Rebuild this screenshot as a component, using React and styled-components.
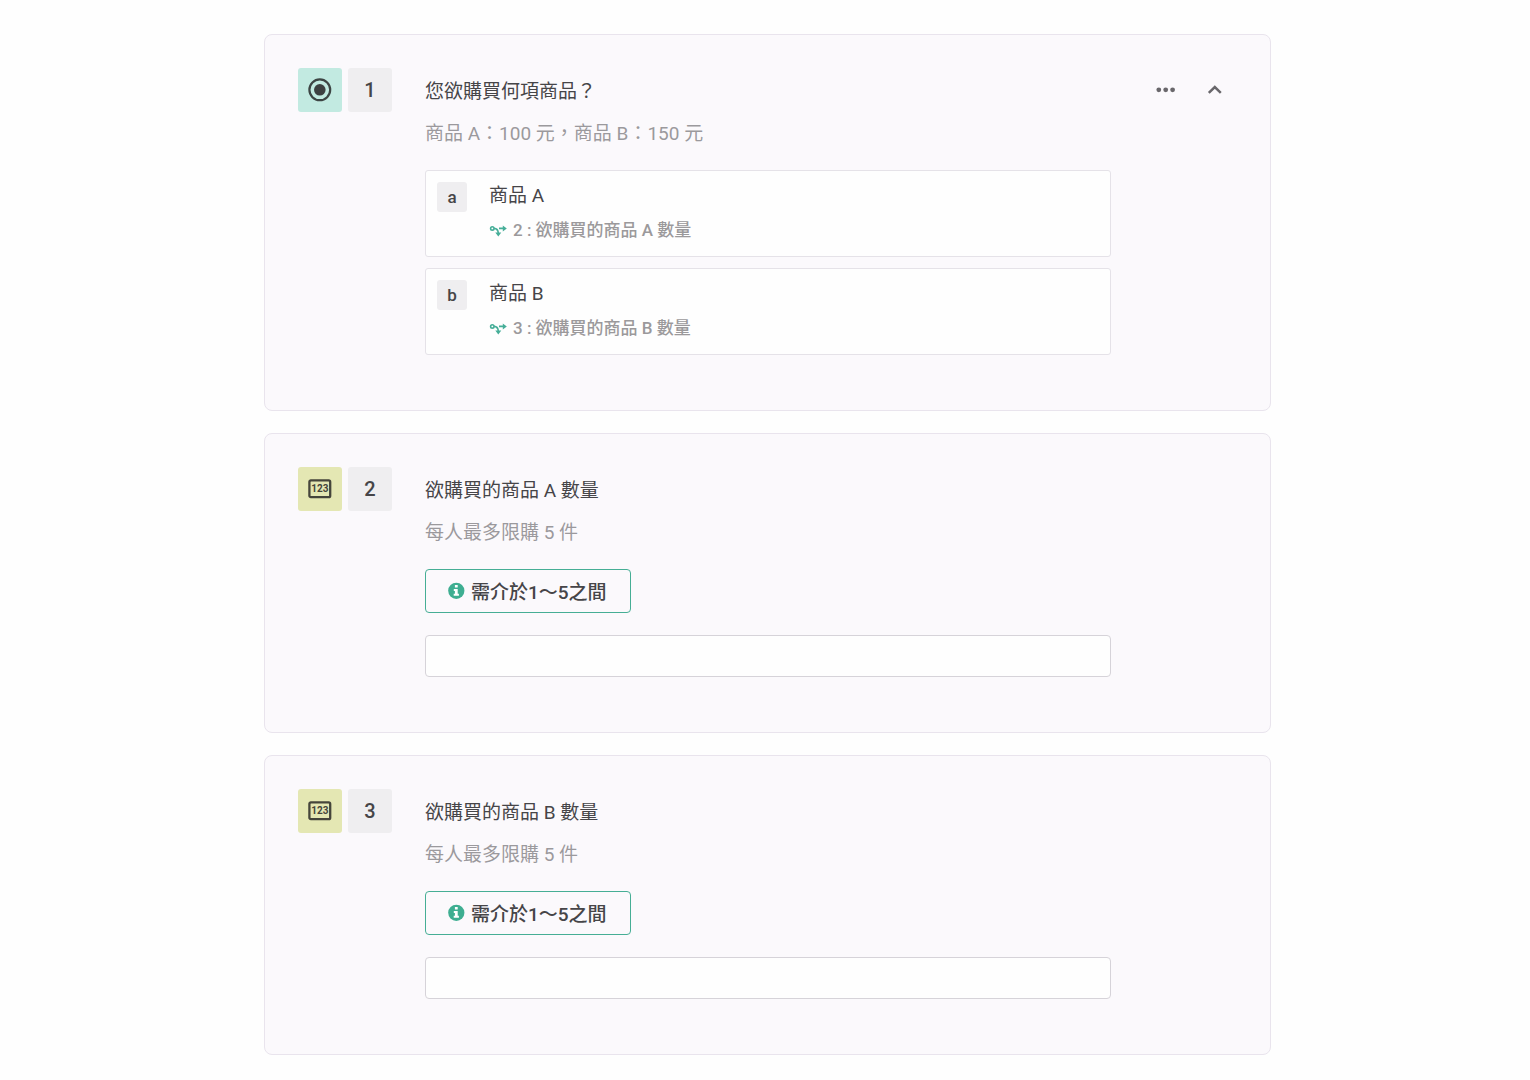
import React from "react";
import styled, { createGlobalStyle } from "styled-components";

const GlobalStyle = createGlobalStyle`
  *, *::before, *::after { box-sizing: border-box; }
  body {
    margin: 0;
    background: #fefefe;
    color: #464548;
    font-family: Roboto, "Noto Sans CJK TC", sans-serif;
    font-size: 19px;
  }
`;

const Page = styled.main`
  padding: 34px 16px 26px 21px;
`;

const QuestionList = styled.div`
  display: flex;
  flex-direction: column;
  gap: 22px;
  max-width: 1007px;
  margin: 0 auto;
`;

const Card = styled.section`
  display: flex;
  align-items: flex-start;
  gap: 33px;
  padding: 33px 33px 55px;
  border: 1px solid #e9e4ed;
  border-radius: 8px;
  background: #fbf9fc;
`;

const Tiles = styled.div`
  display: flex;
  flex: none;
  gap: 6px;
`;

const Tile = styled.span`
  display: flex;
  align-items: center;
  justify-content: center;
  width: ${(p) => (p.$small ? 30 : 44)}px;
  height: ${(p) => (p.$small ? 30 : 44)}px;
  flex: none;
  border-radius: 3px;
  background: ${(p) => p.$tone || "#efeef0"};
  font-size: ${(p) => (p.$small ? 17 : 20)}px;
  font-weight: 500;
`;

const Content = styled.div`
  flex: 0 1 686px;
  min-width: 0;
`;

const Title = styled.h2`
  margin: 0;
  font-size: 19px;
  font-weight: 400;
  line-height: 48px;
`;

const Description = styled.p`
  margin: 0 0 18px;
  color: #9b999d;
  line-height: 36px;
`;

const Options = styled.ul`
  display: flex;
  flex-direction: column;
  gap: 11px;
  margin: 0;
  padding: 0;
  list-style: none;
`;

const Option = styled.li`
  display: flex;
  gap: 22px;
  padding: 11px 11px 12px;
  border: 1px solid #e5e2e8;
  border-radius: 3px;
  background: #fefefe;
`;

const OptionText = styled.div`
  display: flex;
  flex-direction: column;
  gap: 6px;
  line-height: 28px;
`;

const Branch = styled.div`
  display: flex;
  align-items: center;
  gap: 6px;
  color: #9b999b;
  font-size: 17px;
  font-weight: 500;
`;

const Notice = styled.div`
  display: inline-flex;
  align-items: center;
  gap: 6px;
  height: 44px;
  padding: 0 23px 2px 22px;
  border: 1px solid #46ae95;
  border-radius: 4px;
  font-weight: 500;
`;

const NumberInput = styled.input`
  display: block;
  width: 100%;
  height: 42px;
  margin-top: 22px;
  padding: 0 11px;
  border: 1px solid #d6d3d9;
  border-radius: 4px;
  background: #fefefe;
  color: inherit;
  font: inherit;
`;

const Actions = styled.div`
  display: flex;
  gap: 5px;
  margin-left: auto;
`;

const IconButton = styled.button`
  display: flex;
  align-items: center;
  justify-content: center;
  width: 44px;
  height: 44px;
  padding: 0;
  border: 0;
  background: transparent;
  color: #69676b;
  cursor: pointer;
`;

function RadioIcon() {
  return (
    <svg width="24" height="24" viewBox="0 0 24 24" fill="none" aria-hidden="true">
      <circle cx="11.8" cy="11.8" r="10.4" stroke="#3d4544" strokeWidth="2.2" />
      <circle cx="11.8" cy="11.8" r="5.8" fill="#3d4041" />
    </svg>
  );
}

function NumberIcon() {
  return (
    <svg width="24" height="20" viewBox="0 0 24 20" fill="none" aria-hidden="true">
      <rect x="1.4" y="1.4" width="20.8" height="16.8" rx="1.5" stroke="#45453b" strokeWidth="2.3" />
      <text x="11.9" y="13.2" textAnchor="middle" fill="#45453b" fontFamily="Roboto, sans-serif" fontSize="10" fontWeight="700">
        123
      </text>
    </svg>
  );
}

function BranchIcon() {
  return (
    <svg width="18" height="14" viewBox="0 0 18 14" fill="none" stroke="#46ae98" strokeWidth="1.6" aria-hidden="true">
      <circle cx="3.3" cy="5.4" r="1.7" />
      <path d="M5 5.4C8.3 5.4 9.3 7.2 9.3 10.8M10 5.4H14.5" />
      <path d="M13.8 2.4 17.8 5.4l-4 3ZM6.3 9.6 9.3 13.4l3-3.8Z" fill="#46ae98" stroke="none" />
    </svg>
  );
}

function InfoIcon() {
  return (
    <svg width="17" height="17" viewBox="0 0 17 17" aria-hidden="true">
      <circle cx="8.3" cy="8.8" r="8.1" fill="#3eae91" />
      <path d="M6.9 3.1h2.8v2.5H6.9ZM5.8 6.9h3.9v4.9h1.2v2H5.7v-2h1.2V8.9H5.8Z" fill="#fff" />
    </svg>
  );
}

function MoreIcon() {
  return (
    <svg width="20" height="6" viewBox="0 0 20 6" fill="currentColor" aria-hidden="true">
      <circle cx="2.8" cy="2.8" r="2.4" />
      <circle cx="9.7" cy="2.8" r="2.4" />
      <circle cx="16.6" cy="2.8" r="2.4" />
    </svg>
  );
}

function ChevronUpIcon() {
  return (
    <svg width="16" height="10" viewBox="0 0 16 10" fill="none" stroke="currentColor" strokeWidth="2.5" aria-hidden="true">
      <path d="m1.8 7.9 6-5.8 6 5.8" />
    </svg>
  );
}

const options = [
  { key: "a", label: "商品 A", target: "2 : 欲購買的商品 A 數量" },
  { key: "b", label: "商品 B", target: "3 : 欲購買的商品 B 數量" },
];

const quantities = [
  { number: 2, title: "欲購買的商品 A 數量" },
  { number: 3, title: "欲購買的商品 B 數量" },
];

function ChoiceQuestion() {
  return (
    <Card>
      <Tiles>
        <Tile $tone="#c2eae1"><RadioIcon /></Tile>
        <Tile>1</Tile>
      </Tiles>
      <Content>
        <Title>您欲購買何項商品？</Title>
        <Description>商品 A：100 元，商品 B：150 元</Description>
        <Options>
          {options.map((option) => (
            <Option key={option.key}>
              <Tile $small>{option.key}</Tile>
              <OptionText>
                <span>{option.label}</span>
                <Branch><BranchIcon /><span>{option.target}</span></Branch>
              </OptionText>
            </Option>
          ))}
        </Options>
      </Content>
      <Actions>
        <IconButton type="button" aria-label="更多"><MoreIcon /></IconButton>
        <IconButton type="button" aria-label="收合"><ChevronUpIcon /></IconButton>
      </Actions>
    </Card>
  );
}

function QuantityQuestion({ number, title }) {
  const id = `quantity-${number}`;
  return (
    <Card>
      <Tiles>
        <Tile $tone="#e4e7b3"><NumberIcon /></Tile>
        <Tile>{number}</Tile>
      </Tiles>
      <Content>
        <Title><label htmlFor={id}>{title}</label></Title>
        <Description>每人最多限購 5 件</Description>
        <Notice id={`${id}-range`}><InfoIcon /><span>需介於1～5之間</span></Notice>
        <NumberInput id={id} type="text" inputMode="numeric" aria-describedby={`${id}-range`} />
      </Content>
    </Card>
  );
}

export default function App() {
  return (
    <>
      <GlobalStyle />
      <Page>
        <QuestionList>
          <ChoiceQuestion />
          {quantities.map((q) => (
            <QuantityQuestion key={q.number} {...q} />
          ))}
        </QuestionList>
      </Page>
    </>
  );
}
